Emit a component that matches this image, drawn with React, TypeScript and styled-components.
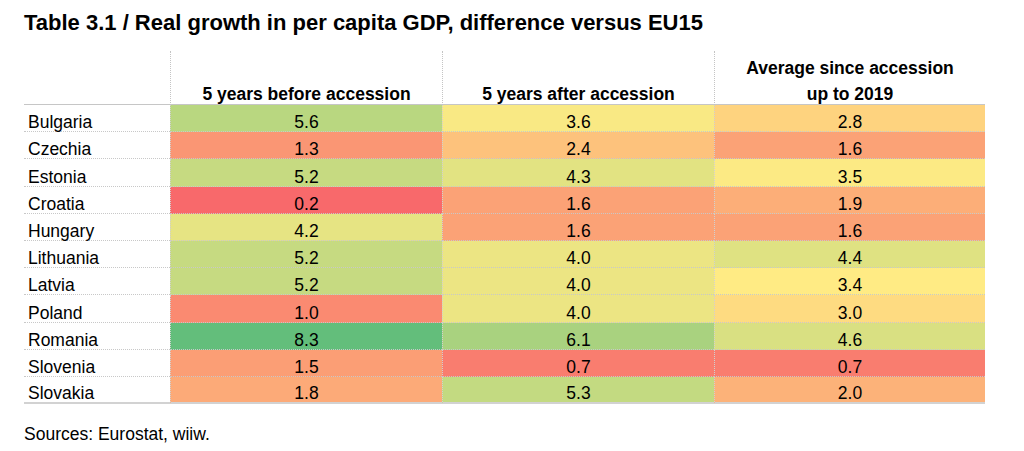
import styled, { createGlobalStyle } from "styled-components";

const GlobalStyle = createGlobalStyle`
  body {
    margin: 0;
    background: #ffffff;
    font-family: "Liberation Sans", Arial, sans-serif;
    color: #000000;
  }
`;

const Page = styled.div`
  padding: 10px 0 0 24px;
`;

const Title = styled.h1`
  margin: 0 0 15px 0;
  font-size: 22px;
  line-height: 26px;
  font-weight: 700;
  color: #000;
`;

const Table = styled.div`
  display: grid;
  grid-template-columns: 146px 272px 272px 271px;
  grid-template-rows: 54px;
  grid-auto-rows: 27.2px;
  width: 961px;
`;

const HeadCell = styled.div<{ $first?: boolean }>`
  display: flex;
  flex-direction: column;
  justify-content: flex-end;
  align-items: center;
  gap: 7px;
  box-sizing: border-box;
  border-bottom: 1px solid #c6c6c6;
  border-left: ${(p) => (p.$first ? "none" : "1px dotted #c4c4c4")};
  font-size: 17.5px;
  line-height: 19px;
  font-weight: 700;
`;

const HeadLine = styled.span`
  display: block;
`;

const Cell = styled.div<{ $bg?: string; $last?: boolean; $name?: boolean }>`
  display: flex;
  align-items: flex-end;
  justify-content: ${(p) => (p.$name ? "flex-start" : "center")};
  box-sizing: border-box;
  padding-left: ${(p) => (p.$name ? "4px" : "0")};
  background: ${(p) => p.$bg ?? "transparent"};
  border-left: ${(p) => (p.$name ? "none" : "1px dotted #d0d0d0")};
  border-bottom: ${(p) =>
    p.$last ? "2px solid #d2d2d2" : "1px dotted #c8c8c8"};
  font-size: 17.5px;
  line-height: 18px;
`;

const Sources = styled.p`
  margin: 20px 0 0 0;
  font-size: 17.5px;
  line-height: 20px;
`;

type Row = { country: string; values: [number, number, number] };

const rows: Row[] = [
  { country: "Bulgaria", values: [5.6, 3.6, 2.8] },
  { country: "Czechia", values: [1.3, 2.4, 1.6] },
  { country: "Estonia", values: [5.2, 4.3, 3.5] },
  { country: "Croatia", values: [0.2, 1.6, 1.9] },
  { country: "Hungary", values: [4.2, 1.6, 1.6] },
  { country: "Lithuania", values: [5.2, 4.0, 4.4] },
  { country: "Latvia", values: [5.2, 4.0, 3.4] },
  { country: "Poland", values: [1.0, 4.0, 3.0] },
  { country: "Romania", values: [8.3, 6.1, 4.6] },
  { country: "Slovenia", values: [1.5, 0.7, 0.7] },
  { country: "Slovakia", values: [1.8, 5.3, 2.0] },
];

// excel style 3-colour scale over the whole block (min / median / max)
const RED = [248, 105, 107];
const YELLOW = [255, 235, 132];
const GREEN = [99, 190, 123];

const all = rows.flatMap((r) => r.values).sort((a, b) => a - b);
const min = all[0];
const max = all[all.length - 1];
const mid = all[Math.floor(all.length / 2)];

function mix(a: number[], b: number[], t: number) {
  const c = a.map((v, i) => Math.round(v + (b[i] - v) * t));
  return `rgb(${c[0]}, ${c[1]}, ${c[2]})`;
}

function colour(v: number) {
  if (v <= mid) return mix(RED, YELLOW, (v - min) / (mid - min));
  return mix(YELLOW, GREEN, (v - mid) / (max - mid));
}

export default function App() {
  return (
    <Page>
      <GlobalStyle />
      <Title>
        Table 3.1 / Real growth in per capita GDP, difference versus EU15
      </Title>

      <Table>
        <HeadCell $first />
        <HeadCell>
          <HeadLine>5 years before accession</HeadLine>
        </HeadCell>
        <HeadCell>
          <HeadLine>5 years after accession</HeadLine>
        </HeadCell>
        <HeadCell>
          <HeadLine>Average since accession</HeadLine>
          <HeadLine>up to 2019</HeadLine>
        </HeadCell>

        {rows.map((r, i) => {
          const last = i === rows.length - 1;
          return [
            <Cell key={r.country} $name $last={last}>
              {r.country}
            </Cell>,
            ...r.values.map((v, j) => (
              <Cell key={r.country + j} $bg={colour(v)} $last={last}>
                {v.toFixed(1)}
              </Cell>
            )),
          ];
        })}
      </Table>

      <Sources>Sources: Eurostat, wiiw.</Sources>
    </Page>
  );
}
